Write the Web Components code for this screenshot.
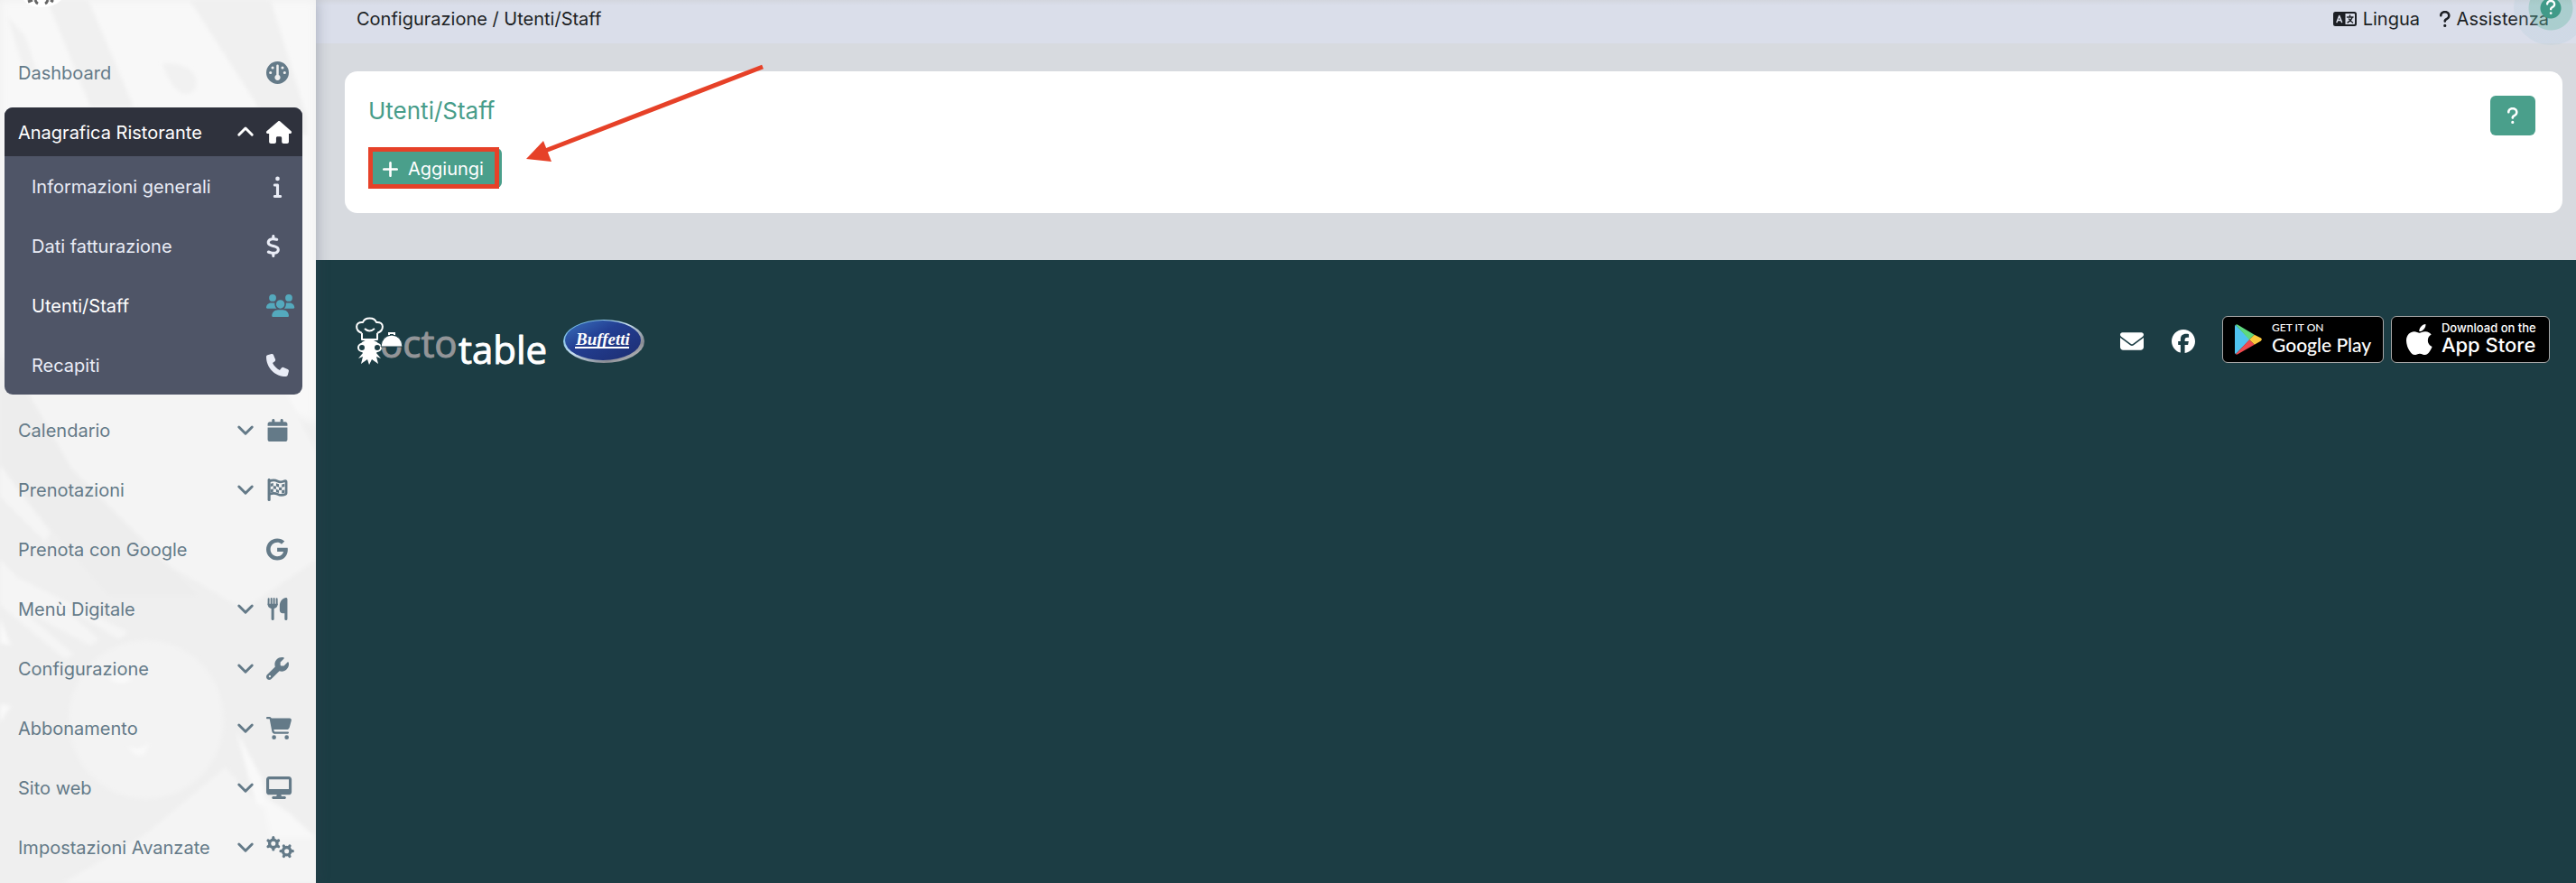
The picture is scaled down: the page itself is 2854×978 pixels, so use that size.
<!DOCTYPE html>
<html lang="it">
<head>
<meta charset="utf-8">
<title>Utenti/Staff</title>
<style>
    body {
        margin: 0;
        font-family: Inter, "Liberation Sans", sans-serif;
        font-size: 20px;
        line-height: 28px;
        color: #1c1f24;
    }
</style>
</head>
<body>
<staff-page></staff-page>

<script>
// [viewBox, markup]
const ICONS = {
    gauge: ['0 0 512 512', '<path fill-rule="evenodd" d="M0 256a256 256 0 1 1 512 0A256 256 0 1 1 0 256zM230 96V306a64 64 0 1 0 52 0V96a26 26 0 0 0-52 0zM112 144a32 32 0 1 0 64 0a32 32 0 1 0-64 0zM336 144a32 32 0 1 0 64 0a32 32 0 1 0-64 0zM64 256a32 32 0 1 0 64 0a32 32 0 1 0-64 0zM384 256a32 32 0 1 0 64 0a32 32 0 1 0-64 0z"/>'],
    house: ['0 0 576 512', '<path d="M575.8 255.5c0 18-15 32.1-32 32.1h-32l.7 160.2c0 2.7-.2 5.4-.5 8.1V472c0 22.1-17.9 40-40 40H392c-22.1 0-40-17.9-40-40V384c0-17.7-14.3-32-32-32H256c-17.7 0-32 14.3-32 32v88c0 22.1-17.9 40-40 40H104c-22.1 0-40-17.9-40-40V287.6H32c-18 0-32-14-32-32.1c0-9 3-17 10-24L266.4 8c7-7 15-8 22-8s15 2 21 7L564.8 231.5c8 7 12 15 11 24z"/>'],
    info: ['-160 0 512 512', '<path d="M48 80a48 48 0 1 1 96 0A48 48 0 1 1 48 80zM0 224c0-17.7 14.3-32 32-32H96c17.7 0 32 14.3 32 32V448h32c17.7 0 32 14.3 32 32s-14.3 32-32 32H32c-17.7 0-32-14.3-32-32s14.3-32 32-32H64V256H32c-17.7 0-32-14.3-32-32z"/>'],
    dollar: ['0 0 320 512', '<path d="M160 0c17.7 0 32 14.3 32 32V67.7c1.6 .2 3.1 .4 4.7 .7c.4 .1 .7 .1 1.1 .2l48 8.8c17.4 3.2 28.9 19.9 25.7 37.2s-19.9 28.9-37.2 25.7l-47.5-8.7c-31.3-4.6-58.9-1.5-78.3 6.2s-27.2 18.3-29 28.1c-2 10.7-.5 16.7 1.2 20.4c1.8 3.9 5.5 8.3 12.8 13.2c16.3 10.7 41.3 17.7 73.7 26.3l2.9 .8c28.6 7.6 63.6 16.8 89.6 33.8c14.2 9.3 27.6 21.9 35.9 39.5c8.5 17.9 10.3 37.9 6.4 59.2c-6.9 38-33.1 63.4-65.6 76.7c-13.7 5.6-28.6 9.2-44.4 11V480c0 17.7-14.3 32-32 32s-32-14.3-32-32V445.1c-.4-.1-.9-.1-1.3-.2c-24.4-3.8-64.5-14.3-91.5-26.3c-16.1-7.2-23.4-26.1-16.2-42.2s26.1-23.4 42.2-16.2c20.9 9.3 55.3 18.5 75.2 21.6c31.9 4.7 58.2 2 76-5.3c16.9-6.9 24.6-16.9 26.8-28.9c1.9-10.6 .4-16.7-1.3-20.4c-1.9-4-5.6-8.4-13-13.3c-16.4-10.7-41.5-17.7-74-26.3l-2.8-.7C119.4 279.3 84.4 270 58.4 253c-14.2-9.3-27.5-22-35.8-39.6c-8.4-17.9-10.1-37.9-6.1-59.2C23.7 116 52.3 91.2 84.8 78.3c13.3-5.3 27.9-8.9 43.2-11V32c0-17.7 14.3-32 32-32z"/>'],
    users: ['0 0 640 512', '<path d="M144 0a80 80 0 1 1 0 160A80 80 0 1 1 144 0zM512 0a80 80 0 1 1 0 160A80 80 0 1 1 512 0zM0 298.7C0 239.8 47.8 192 106.7 192h42.7c15.9 0 31 3.5 44.6 9.7c-1.3 7.2-1.9 14.7-1.9 22.3c0 38.2 16.8 72.5 43.3 96H21.3C9.6 320 0 310.4 0 298.7zM405.3 320c25.9-23.5 42.6-57.8 42.6-96c0-7.6-.7-15-1.9-22.3c13.6-6.3 28.7-9.7 44.6-9.7h42.7C592.2 192 640 239.8 640 298.7c0 11.8-9.6 21.3-21.3 21.3H405.3zM224 224a96 96 0 1 1 192 0 96 96 0 1 1 -192 0zM128 485.3C128 411.7 187.7 352 261.3 352H378.7C452.3 352 512 411.7 512 485.3c0 14.7-11.9 26.7-26.7 26.7H154.7c-14.7 0-26.7-11.9-26.7-26.7z"/>'],
    phone: ['0 0 512 512', '<path d="M164.9 24.6c-7.7-18.6-28-28.5-47.4-23.2l-88 24C12.1 30.2 0 46 0 64C0 311.4 200.6 512 448 512c18 0 33.8-12.1 38.6-29.5l24-88c5.3-19.4-4.6-39.7-23.2-47.4l-96-40c-16.3-6.8-35.2-2.1-46.3 11.6L304.7 368C234.3 334.7 177.3 277.7 144 207.3L193.3 167c13.7-11.2 18.4-30 11.6-46.3l-40-96z"/>'],
    calendar: ['-32 0 512 512', '<path d="M96 32V64H48C21.5 64 0 85.5 0 112v48H448V112c0-26.5-21.5-48-48-48H352V32c0-17.7-14.3-32-32-32s-32 14.3-32 32V64H160V32c0-17.7-14.3-32-32-32S96 14.3 96 32zM448 192H0V464c0 26.5 21.5 48 48 48H400c26.5 0 48-21.5 48-48V192z"/>'],
    flag: ['-32 0 512 512', '<path d="M32 0C49.700 0 64 14.300 64 32V480a32 32 0 0 1-64 0V32C0 14.300 14.300 0 32 0z"/><path fill="none" stroke="currentColor" stroke-width="56" stroke-linejoin="round" d="M32 60L90 44C140 30 180 38 224 60C276 86 326 82 384 56C406 46 420 54 420 72V332C420 348 414 354 402 358C334 386 280 384 224 356C180 334 140 328 90 340L32 354"/><path d="M64 116l64-14v68l-64 14zM192 108l64 22v68l-64-24zM320 134l64-14v66l-64 16zM128 170l64 4v66l-64-6zM256 198l64 4v66l-64-4zM64 246l64-12v66l-64 14zM192 240l64 24v66l-64-24zM320 268l64-14v66l-64 16z"/>'],
    google: ['0 0 496 512', '<path d="M488 261.800C488 403.300 391.100 504 248 504 110.800 504 0 393.200 0 256S110.800 8 248 8c66.800 0 123 24.500 166.300 64.900l-67.500 64.900C258.500 52.600 94.300 116.600 94.300 256c0 86.500 69.100 156.600 153.700 156.600 98.200 0 135-70.400 140.800-106.900H248v-85.300h236.100c2.300 12.700 3.900 24.900 3.900 41.400z"/>'],
    utensils: ['-32 0 512 512', '<g fill="none" stroke="currentColor" stroke-width="40" stroke-linecap="round"><path d="M22 24L20 150M84 20V160M144 20V160M206 24L208 150"/><path stroke-width="62" d="M114 200V480"/></g><path d="M0 140H228C228 212 188 250 114 250S0 212 0 140zM416 0c18 0 32 14 32 32V480a32 32 0 0 1-64 0V352H336c-35 0-64-29-64-64V176C272 80 350 0 416 0z"/>'],
    wrench: ['0 0 512 512', '<path fill-rule="evenodd" d="M352 320c88.400 0 160-71.600 160-160c0-15.300-2.200-30.100-6.200-44.200c-3.100-10.800-16.400-13.200-24.300-5.300l-76.800 76.800c-3 3-7.100 4.700-11.300 4.700H336c-8.800 0-16-7.200-16-16V118.600c0-4.200 1.700-8.300 4.700-11.300l76.800-76.800c7.900-7.900 5.400-21.200-5.300-24.300C382.100 2.200 367.300 0 352 0C263.600 0 192 71.600 192 160c0 19.100 3.400 37.500 9.500 54.500L19.900 396.100C7.200 408.800 0 426.100 0 444.100C0 481.600 30.400 512 67.900 512c18 0 35.300-7.200 48-19.900L297.500 310.500c17 6.200 35.400 9.500 54.500 9.500zM80 408a24 24 0 1 1 0 48 24 24 0 1 1 0-48z"/>'],
    cart: ['0 0 576 512', '<path d="M0 24C0 10.700 10.700 0 24 0H69.500c22 0 41.500 12.800 50.600 32h411c26.300 0 45.500 25 38.600 50.400l-41 152.300c-8.500 31.400-37 53.300-69.500 53.300H170.700l5.400 28.500c2.200 11.300 12.100 19.500 23.600 19.500H488c13.300 0 24 10.700 24 24s-10.700 24-24 24H199.700c-34.600 0-64.300-24.600-70.700-58.500L77.400 54.500c-.7-3.800-4-6.500-7.900-6.500H24C10.700 48 0 37.300 0 24zM128 464a48 48 0 1 1 96 0 48 48 0 1 1 -96 0zm336-48a48 48 0 1 1 0 96 48 48 0 1 1 0-96z"/>'],
    desktop: ['0 0 576 512', '<path fill-rule="evenodd" d="M64 0C28.700 0 0 28.700 0 64V352c0 35.300 28.700 64 64 64H240l-10.700 32H160c-17.700 0-32 14.300-32 32s14.300 32 32 32H416c17.700 0 32-14.300 32-32s-14.300-32-32-32H346.700L336 416H512c35.300 0 64-28.700 64-64V64c0-35.300-28.700-64-64-64H64zM512 64V288H64V64H512z"/>'],
    gears: ['0 0 640 512', '<g fill="none" stroke="currentColor"><circle cx="160" cy="170" r="86" stroke-width="68"/><g stroke-width="66" stroke-linecap="round"><path d="M160 60V34M160 280V306M255 115L278 102M255 225L278 238M65 115L42 102M65 225L42 238"/></g><circle cx="464" cy="342" r="86" stroke-width="68"/><g stroke-width="66" stroke-linecap="round"><path d="M574 342H600M354 342H328M519 247L532 224M519 437L532 460M409 247L396 224M409 437L396 460"/></g></g>'],
    down: ['0 0 512 512', '<path fill="none" stroke="currentColor" stroke-width="84" stroke-linecap="round" stroke-linejoin="round" d="M50 170L256 376L462 170"/>'],
    up: ['0 0 512 512', '<path fill="none" stroke="currentColor" stroke-width="84" stroke-linecap="round" stroke-linejoin="round" d="M50 350L256 144L462 350"/>'],
    plus: ['16 48 416 416', '<path d="M256 80c0-17.700-14.300-32-32-32s-32 14.300-32 32V224H48c-17.700 0-32 14.300-32 32s14.300 32 32 32H192V432c0 17.700 14.300 32 32 32s32-14.300 32-32V288H400c17.700 0 32-14.300 32-32s-14.300-32-32-32H256V80z"/>'],
    question: ['16 32 288 448', '<path d="M80 160c0-35.300 28.700-64 64-64h32c35.300 0 64 28.700 64 64v3.600c0 21.800-11.100 42.100-29.400 53.800l-42.200 27.100c-25.200 16.200-40.400 44.100-40.400 74V320c0 17.700 14.300 32 32 32s32-14.300 32-32v-1.400c0-8.200 4.200-15.800 11-20.200l42.200-27.100c36.600-23.600 58.800-64.100 58.800-107.700V160c0-70.700-57.300-128-128-128H144C73.300 32 16 89.300 16 160c0 17.700 14.300 32 32 32s32-14.300 32-32zm80 320a40 40 0 1 0 0-80 40 40 0 1 0 0 80z"/>'],
    language: ['0 0 52 32', '<path fill-rule="evenodd" d="M5 0H47a5 5 0 0 1 5 5V27a5 5 0 0 1-5 5H5a5 5 0 0 1-5-5V5a5 5 0 0 1 5-5zM27 4V28H46a2 2 0 0 0 2-2V6a2 2 0 0 0-2-2z"/><path fill="none" stroke="#dadeea" stroke-width="3" stroke-linecap="round" stroke-linejoin="round" d="M8 23L13.500 9L19 23M10 19H17"/><path fill="none" stroke="currentColor" stroke-width="3" stroke-linecap="round" d="M31 12H44M37 8V11M42 13C40 19 36 22 32 24M35 16C37 20 40 22 43 24"/>'],
    envelope: ['0 0 512 512', '<path d="M48 64C21.500 64 0 85.500 0 112c0 15.100 7.100 29.300 19.200 38.400L236.800 313.600c11.400 8.500 27 8.500 38.400 0L492.800 150.400c12.100-9.100 19.200-23.300 19.200-38.400c0-26.500-21.500-48-48-48H48zM0 176V384c0 35.300 28.700 64 64 64H448c35.300 0 64-28.700 64-64V176L294.400 339.200c-22.800 17.100-54 17.100-76.800 0L0 176z"/>'],
    facebook: ['0 0 512 512', '<path d="M512 256C512 114.600 397.400 0 256 0S0 114.600 0 256C0 376 82.700 476.800 194.200 504.500V334.200H141.400V256h52.800V222.300c0-87.100 39.400-127.500 125-127.500c16.200 0 44.200 3.200 55.700 6.400V172c-6-.6-16.500-1-29.600-1c-42 0-58.200 15.900-58.200 57.200V256h83.600l-14.400 78.200H287V510.100C413.800 494.800 512 386.900 512 256z"/>'],
    play: ['0 0 90 102', '<path fill="#4fc3f0" d="M3 2Q0 4 0 8V94Q0 98 3 100L50 51z"/><path fill="#5fd97f" d="M3 2Q6 0 10 2L65 35L48 52z"/><path fill="#fcc93c" d="M65 35L86 46Q93 51 86 56L65 68L48 52z"/><path fill="#ee4a50" d="M3 100Q6 102 10 100L65 68L48 52z"/>'],
    apple: ['4 32 368 448', '<path d="M318.700 268.700c-.2-36.700 16.400-64.400 50-84.800-18.800-26.900-47.200-41.700-84.700-44.600-35.500-2.800-74.300 20.700-88.500 20.700-15 0-49.400-19.700-76.400-19.700C63.300 141.200 4 184.800 4 273.500q0 39.300 14.400 81.200c12.800 36.700 59 126.700 107.200 125.200 25.200-.6 43-17.900 75.800-17.900 31.800 0 48.300 17.900 76.400 17.900 48.600-.7 90.400-82.500 102.600-119.300-65.200-30.700-61.700-90-61.700-91.900zm-56.600-164.200c27.300-32.400 24.800-61.900 24-72.500-24.100 1.400-52 16.400-67.900 34.900-17.500 19.800-27.800 44.300-25.600 71.900 26.100 2 49.900-11.400 69.500-34.300z"/>']
};

function makeTemplate(html) {
    const template = document.createElement('template');
    template.innerHTML = html;
    return template;
}

class BaseElement extends HTMLElement {
    constructor(template) {
        super();
        this.attachShadow({ mode: 'open' });
        this.shadowRoot.appendChild(template.content.cloneNode(true));
    }
}

const iconTemplate = makeTemplate(`
    <style>
        :host { display: inline-flex; flex: none; height: 25px; }
        svg { display: block; height: 100%; width: auto; fill: currentColor; overflow: visible; }
    </style>
    <svg aria-hidden="true"></svg>
`);

class AppIcon extends BaseElement {
    static get observedAttributes() {
        return ['name'];
    }

    constructor() {
        super(iconTemplate);
    }

    attributeChangedCallback(attr, oldValue, newValue) {
        const [box, markup] = ICONS[newValue];
        const svg = this.shadowRoot.querySelector('svg');
        svg.setAttribute('viewBox', box);
        svg.innerHTML = markup;
    }
}

// A menu row: plain link, or a button with a chevron when it has the "expandable" attribute
class NavItem extends HTMLElement {
    constructor() {
        super();
        this.attachShadow({ mode: 'open' });
    }

    connectedCallback() {
        const expandable = this.hasAttribute('expandable');
        const chevron = this.hasAttribute('open') ? 'up' : 'down';
        const tag = expandable ? 'button type="button"' : 'a href="#"';
        const content = `
            <span class="label"><slot></slot></span>
            ${expandable ? `<app-icon class="chevron" name="${chevron}"></app-icon>` : ''}
            <span class="icon"><app-icon name="${this.getAttribute('icon')}"></app-icon></span>
        `;
        this.shadowRoot.innerHTML = `
            <style>
                :host { display: block; color: #647a88; }
                a, button {
                    display: flex;
                    align-items: center;
                    box-sizing: border-box;
                    width: 100%;
                    height: var(--row-height, 66px);
                    padding: 0 var(--row-right, 15px) 0 var(--row-left, 20px);
                    border: 0;
                    background: none;
                    color: inherit;
                    font: inherit;
                    text-align: left;
                    text-decoration: none;
                    cursor: pointer;
                }
                .label { flex: 1; padding-top: 2px; white-space: nowrap; }
                .chevron { height: 18px; margin-right: 14px; }
                .icon { display: flex; width: 40px; color: var(--icon-color, inherit); }
            </style>
            <${tag}>${content}</${expandable ? 'button' : 'a'}>
        `;
    }
}

const navGroupTemplate = makeTemplate(`
    <style>
        :host {
            display: block;
            margin: 6px 15px 6px 5px;
            border-radius: 9px;
            overflow: hidden;
            background: #4f5567;
            --row-right: 0px;
        }
        .head { background: #2f323d; --row-height: 54px; --row-left: 15px; }
        .body { --row-left: 30px; }
    </style>
    <div class="head"><slot name="head"></slot></div>
    <div class="body"><slot></slot></div>
`);

class NavGroup extends BaseElement {
    constructor() {
        super(navGroupTemplate);
    }
}

const sideBarTemplate = makeTemplate(`
    <style>
        :host {
            display: block;
            position: relative;
            z-index: 1;
            background: #efefef;
            box-shadow: 0 0 14px rgba(60, 70, 90, .35);
        }
        .backdrop { position: absolute; inset: 0; width: 100%; height: 100%; }
        .logo { display: block; height: 47px; padding-left: 22px; }
        nav { position: relative; }
        .white { color: #fff; }
        .light { color: #e9ecf6; }
        .current { color: #fff; --icon-color: #54a9bd; }
    </style>
    <svg class="backdrop" viewBox="0 0 350 978" preserveAspectRatio="none" aria-hidden="true">
        <defs>
            <filter id="soft"><feGaussianBlur stdDeviation="5"/></filter>
            <filter id="edge"><feGaussianBlur stdDeviation="2"/></filter>
        </defs>
        <path fill="#f8f8f8" filter="url(#soft)" d="M0 0H350V470L250 430L180 620L0 390z"/>
        <g filter="url(#edge)">
            <path fill="#f0f0f0" d="M52 0H98L148 118H100zM210 0H300L340 130V150L300 140z"/>
            <path fill="#f1f1f1" d="M8 18L28 40L44 88L24 70zM180 70C210 70 222 82 216 100C200 112 188 94 180 70z"/>
            <path fill="#f4f4f4" d="M20 420H310L350 500V620L270 675L185 625L80 520z"/>
            <path fill="#ededed" d="M0 430L28 430L80 520L185 625L220 660H120L0 520z"/>
            <path fill="#f5f5f5" d="M0 515L56 590L50 600L0 550zM0 620L20 640L142 700L132 708L60 665L110 708L100 715L20 672L82 725L72 730L0 670z"/>
            <path fill="#f9f9f9" d="M0 685L12 715L0 712zM0 780L12 782L0 800zM262 810L290 862L300 915L282 885z"/>
            <path fill="#f4f4f4" d="M70 978L160 925L250 850L285 890L350 930V978z"/>
            <path fill="#f8f8f8" d="M290 880L320 900L350 928H300z"/>
        </g>
        <ellipse cx="162" cy="797" rx="86" ry="88" fill="#f3f3f3" filter="url(#edge)"/>
        <path fill="#f9f9f9" filter="url(#edge)" d="M120 750Q138 742 146 752Q132 762 120 750zM142 826Q154 834 166 822L160 835Q148 840 142 826z"/>
    </svg>
    <nav>
        <svg class="logo" width="48" height="47" viewBox="0 0 48 47" aria-hidden="true">
            <path fill="#fff" d="M4 0H46Q38 8 24 8T4 0z"/>
            <path fill="none" stroke="#666" stroke-width="3" d="M9 2L14 0M17 0Q18 3 20 4M28 4Q30 3 31 0M34 0L37 2"/>
        </svg>
        <nav-item icon="gauge">Dashboard</nav-item>
        <nav-group>
            <nav-item slot="head" class="white" icon="house" expandable open>Anagrafica Ristorante</nav-item>
            <nav-item class="light" icon="info">Informazioni generali</nav-item>
            <nav-item class="light" icon="dollar">Dati fatturazione</nav-item>
            <nav-item class="current" icon="users">Utenti/Staff</nav-item>
            <nav-item class="light" icon="phone">Recapiti</nav-item>
        </nav-group>
        <nav-item icon="calendar" expandable>Calendario</nav-item>
        <nav-item icon="flag" expandable>Prenotazioni</nav-item>
        <nav-item icon="google">Prenota con Google</nav-item>
        <nav-item icon="utensils" expandable>Menù Digitale</nav-item>
        <nav-item icon="wrench" expandable>Configurazione</nav-item>
        <nav-item icon="cart" expandable>Abbonamento</nav-item>
        <nav-item icon="desktop" expandable>Sito web</nav-item>
        <nav-item icon="gears" expandable>Impostazioni Avanzate</nav-item>
    </nav>
`);

class SideBar extends BaseElement {
    constructor() {
        super(sideBarTemplate);
    }
}

const topBarTemplate = makeTemplate(`
    <style>
        :host {
            display: flex;
            justify-content: space-between;
            position: relative;
            height: 48px;
            padding: 0 30px 0 45px;
            background: linear-gradient(#d3d6de, #dadeea 6px);
        }
        .crumbs, .links { display: flex; height: 42px; align-items: center; white-space: pre; }
        .links { gap: 22px; }
        a { display: flex; align-items: center; gap: 7px; color: inherit; text-decoration: none; }
        .lang { height: 16px; }
        .ask { height: 18px; }
        .bubble {
            position: absolute;
            top: -32px;
            right: -13px;
            width: 82px;
            height: 82px;
            padding: 0;
            border: 0;
            border-radius: 50%;
            background: radial-gradient(circle, #409a88 0 11px, rgba(98, 181, 164, .4) 12px 24px, rgba(160, 195, 210, .18) 25px);
            color: #fff;
        }
        .bubble app-icon { height: 16px; }
    </style>
    <div class="crumbs">Configurazione / Utenti/Staff</div>
    <div class="links">
        <a href="#"><app-icon class="lang" name="language"></app-icon>Lingua</a>
        <a href="#"><app-icon class="ask" name="question"></app-icon>Assistenza</a>
    </div>
    <button class="bubble" type="button" aria-label="Aiuto"><app-icon name="question"></app-icon></button>
`);

class TopBar extends BaseElement {
    constructor() {
        super(topBarTemplate);
    }
}

const cardTemplate = makeTemplate(`
    <style>
        :host {
            display: flex;
            justify-content: space-between;
            align-items: flex-start;
            position: relative;
            padding: 27px 30px 28px 26px;
            border-radius: 14px;
            background: #fff;
        }
        h1 { margin: 0 0 24px; font-size: 26px; line-height: 34px; font-weight: 400; color: #479d8a; }
        button {
            display: flex;
            align-items: center;
            justify-content: center;
            height: 44px;
            border: 0;
            border-radius: 6px;
            background: #4a9f8b;
            color: #fff;
            font: inherit;
        }
        .add { gap: 11px; padding: 2px 20px 0 16px; }
        .add app-icon { height: 17px; }
        .help { width: 50px; padding: 0; }
        .help app-icon { height: 18px; }
        .target { position: relative; display: inline-block; }
        .frame { position: absolute; inset: -1px 3px -1px 0; border: 5px solid #e64128; }
        .arrow { position: absolute; top: 0; left: 0; width: 480px; height: 150px; overflow: visible; pointer-events: none; }
    </style>
    <div>
        <h1><slot name="title"></slot></h1>
        <div class="target">
            <button class="add" type="button"><app-icon name="plus"></app-icon><slot name="action"></slot></button>
            <div class="frame"></div>
        </div>
    </div>
    <button class="help" type="button" aria-label="Aiuto"><app-icon name="question"></app-icon></button>
    <svg class="arrow" viewBox="0 0 480 150" fill="#e64128" aria-hidden="true">
        <path stroke="#e64128" stroke-width="5" d="M463 -5L222 88"/>
        <path d="M201 97L220 77L229 100z"/>
    </svg>
`);

class PageCard extends BaseElement {
    constructor() {
        super(cardTemplate);
    }
}

const badgeTemplate = makeTemplate(`
    <style>
        :host { display: block; }
        a {
            display: flex;
            align-items: center;
            box-sizing: border-box;
            height: 52px;
            border: 1px solid #a6a6a6;
            border-radius: 6px;
            background: #000;
            color: #fff;
            text-decoration: none;
            white-space: nowrap;
            padding: 0 0 0 var(--badge-left, 13px);
            gap: 11px;
        }
        app-icon { height: 34px; }
        .text { display: flex; flex-direction: column; padding-bottom: 2px; }
        .top { font-size: var(--top-size, 12px); line-height: 14px; font-weight: 500; }
        .name { font-size: var(--name-size, 22px); line-height: 24px; font-weight: 500; }
    </style>
    <a href="#">
        <app-icon></app-icon>
        <span class="text">
            <span class="top"><slot name="top"></slot></span>
            <span class="name"><slot></slot></span>
        </span>
    </a>
`);

class StoreBadge extends BaseElement {
    constructor() {
        super(badgeTemplate);
        this.shadowRoot.querySelector('app-icon').setAttribute('name', this.getAttribute('icon'));
    }
}

const footerTemplate = makeTemplate(`
    <style>
        :host { display: block; padding: 62px 29px 0 45px; background: #1c3d44; color: #fff; }
        .row { display: flex; align-items: center; height: 52px; }
        .brands { display: flex; align-items: center; gap: 14px; flex: 1; padding-top: 4px; }
        .brands svg { display: block; overflow: visible; }
        .social { display: flex; gap: 31px; margin-right: 30px; padding-top: 4px; }
        .social a { color: #fff; display: flex; }
        .social app-icon { height: 26px; }
        .badges { display: flex; gap: 8px; }
        .google { width: 179px; font-family: Lato, sans-serif; --name-size: 21px; }
        .ios { width: 176px; --badge-left: 16px; --top-size: 13px; }
    </style>
    <div class="row">
        <div class="brands">
            <svg width="214" height="54" viewBox="0 0 214 54" role="img" aria-label="octotable">
                <g fill="none" stroke="#fff" stroke-width="2" stroke-linejoin="round">
                    <path d="M6 18C-2 15-2 5 7 6C9 0 20 0 22 6C31 5 31 15 23 18M6 18V25H23V18M9 13Q14 18 20 13"/>
                </g>
                <path fill="#fff" d="M6 28Q14 22 23 28L27 34L22 40L27 46L22 44L24 52L17 47L14 53L12 47L5 52L7 44L2 46L7 40L2 34z"/>
                <g fill="#1c3d44" stroke="#fff" stroke-width="2"><circle cx="6" cy="34" r="4"/><circle cx="23" cy="34" r="4"/></g>
                <g font-family="Open Sans, sans-serif" font-size="42">
                    <text x="26" y="45" fill="#939598" stroke="#939598" stroke-linejoin="round">octo</text>
                    <text x="113" y="52" fill="#fff" stroke="#fff" stroke-linejoin="round">table</text>
                </g>
                <path fill="#fff" stroke="#1c3d44" stroke-width="1" d="M27 33Q28 21 39 20Q50 21 51 33z"/>
                <path fill="none" stroke="#fff" stroke-width="2" d="M36 20V18H42V20"/>
            </svg>
            <svg width="92" height="50" viewBox="0 0 92 50" role="img" aria-label="Buffetti">
                <defs>
                    <linearGradient id="rim" x2="1" y2="1"><stop stop-color="#49a5dd"/><stop offset=".45" stop-color="#c5def0"/><stop offset=".75" stop-color="#888b93"/><stop offset="1" stop-color="#ddd"/></linearGradient>
                    <linearGradient id="blue" x2="1" y2="1"><stop stop-color="#3a72bd"/><stop offset=".4" stop-color="#233f93"/><stop offset="1" stop-color="#1c2c70"/></linearGradient>
                </defs>
                <ellipse cx="46" cy="25" rx="45" ry="24" fill="url(#rim)"/>
                <ellipse cx="45" cy="24" rx="42" ry="22" fill="url(#blue)"/>
                <text x="15" y="29" fill="#fff" font-family="Liberation Serif, serif" font-size="19" font-weight="700" font-style="italic">Buffetti</text>
                <path fill="#fff" d="M14 31H74V33H14z"/>
            </svg>
        </div>
        <div class="social">
            <a href="#" aria-label="Email"><app-icon name="envelope"></app-icon></a>
            <a href="#" aria-label="Facebook"><app-icon name="facebook"></app-icon></a>
        </div>
        <div class="badges">
            <store-badge class="google" icon="play"><span slot="top">GET IT ON</span>Google Play</store-badge>
            <store-badge class="ios" icon="apple"><span slot="top">Download on the</span>App Store</store-badge>
        </div>
    </div>
`);

class PageFooter extends BaseElement {
    constructor() {
        super(footerTemplate);
    }
}

const pageTemplate = makeTemplate(`
    <style>
        :host {
            display: grid;
            grid-template-columns: 350px minmax(0, 1fr);
            min-height: 100vh;
            background: #d7dadf;
        }
        .content { display: flex; flex-direction: column; overflow: hidden; }
        main { padding: 31px 15px 52px 32px; }
        page-footer { flex: 1; }
    </style>
    <side-bar></side-bar>
    <div class="content">
        <top-bar></top-bar>
        <main>
            <page-card>
                <span slot="title">Utenti/Staff</span>
                <span slot="action">Aggiungi</span>
            </page-card>
        </main>
        <page-footer></page-footer>
    </div>
`);

class StaffPage extends BaseElement {
    constructor() {
        super(pageTemplate);
    }
}

window.customElements.define('app-icon', AppIcon);
window.customElements.define('nav-item', NavItem);
window.customElements.define('nav-group', NavGroup);
window.customElements.define('side-bar', SideBar);
window.customElements.define('top-bar', TopBar);
window.customElements.define('page-card', PageCard);
window.customElements.define('store-badge', StoreBadge);
window.customElements.define('page-footer', PageFooter);
window.customElements.define('staff-page', StaffPage);
</script>
</body>
</html>
